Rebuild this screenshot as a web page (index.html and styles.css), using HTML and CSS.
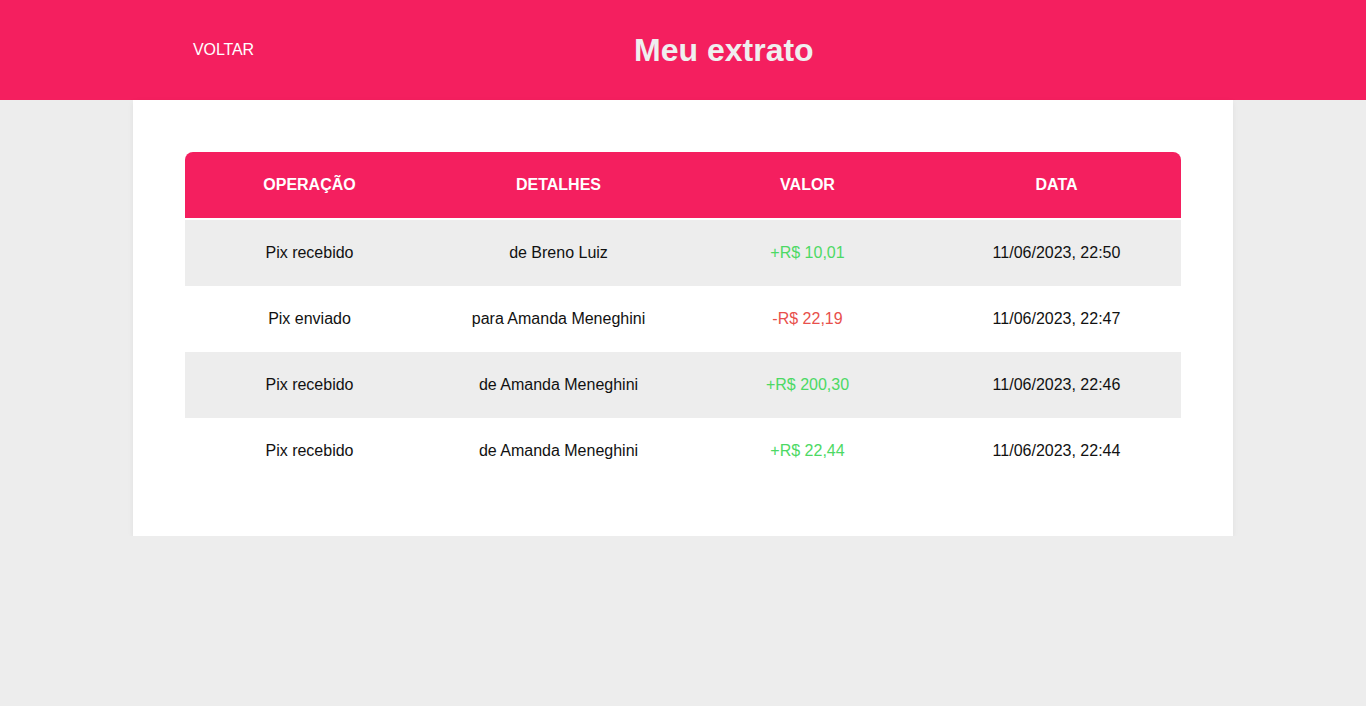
FILE: index.html
```html
<!DOCTYPE html>
<html lang="pt-BR">
<head>
<meta charset="utf-8">
<title>Meu extrato</title>
<link rel="stylesheet" href="styles.css">
</head>
<body>
<header class="topbar">
  <div class="topbar-inner">
    <a class="back" href="#">VOLTAR</a>
    <h1 class="title">Meu extrato</h1>
  </div>
</header>
<main class="card">
  <table class="statement">
    <thead>
      <tr><th>OPERAÇÃO</th><th>DETALHES</th><th>VALOR</th><th>DATA</th></tr>
    </thead>
    <tbody>
      <tr><td>Pix recebido</td><td>de Breno Luiz</td><td class="pos">+R$ 10,01</td><td>11/06/2023, 22:50</td></tr>
      <tr><td>Pix enviado</td><td>para Amanda Meneghini</td><td class="neg">-R$ 22,19</td><td>11/06/2023, 22:47</td></tr>
      <tr><td>Pix recebido</td><td>de Amanda Meneghini</td><td class="pos">+R$ 200,30</td><td>11/06/2023, 22:46</td></tr>
      <tr><td>Pix recebido</td><td>de Amanda Meneghini</td><td class="pos">+R$ 22,44</td><td>11/06/2023, 22:44</td></tr>
    </tbody>
  </table>
</main>
</body>
</html>
```
FILE: styles.css
```css
* { box-sizing: border-box; }
body {
  margin: 0;
  background: #ededed;
  font-family: "Liberation Sans", Arial, sans-serif;
  color: #111;
}
.topbar {
  background: #f41f5f;
  height: 100px;
}
.topbar-inner {
  width: 1100px;
  height: 100%;
  margin: 0 auto;
  padding: 0 60px;
  display: flex;
  align-items: center;
  gap: 380px;
}
.back {
  color: #fff;
  text-decoration: none;
  font-size: 16px;
  letter-spacing: -0.1px;
}
.title {
  margin: 0;
  color: #efefef;
  font-size: 32px;
  font-weight: bold;
}
.card {
  width: 1100px;
  margin: 0 auto;
  background: #fff;
  padding: 52px;
  box-shadow: 0 2px 6px rgba(0,0,0,0.06);
}
.statement {
  width: 100%;
  border-collapse: separate;
  border-spacing: 0;
  table-layout: fixed;
  font-size: 16px;
}
.statement th {
  background: #f41f5f;
  color: #fff;
  font-weight: bold;
  height: 68px;
  border-bottom: 2px solid #fff;
}
.statement th:first-child { border-top-left-radius: 8px; }
.statement th:last-child { border-top-right-radius: 8px; }
.statement td {
  height: 66px;
  text-align: center;
  color: #111;
}
.statement tbody tr:nth-child(odd) td { background: #ededed; }
.statement td.pos { color: #4cd964; }
.statement td.neg { color: #e8504c; }
```
